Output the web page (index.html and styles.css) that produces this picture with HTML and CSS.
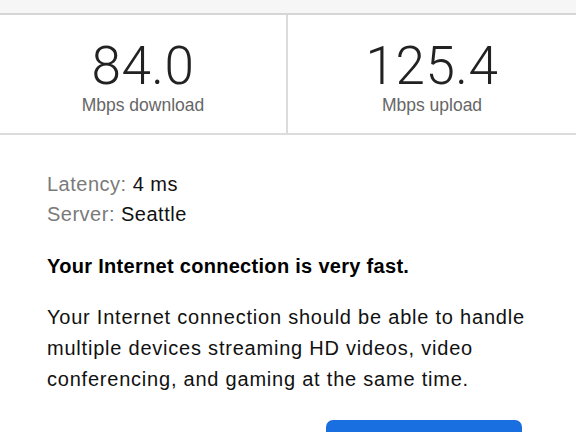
FILE: index.html
```html
<!DOCTYPE html>
<html lang="en">
<head>
<meta charset="utf-8">
<title>Speed test</title>
<link rel="stylesheet" href="styles.css">
</head>
<body>
<div class="topbar"></div>
<div class="stats">
  <div class="stat stat-left">
    <div class="num">84.0</div>
    <div class="unit">Mbps download</div>
  </div>
  <div class="stat">
    <div class="num">125.4</div>
    <div class="unit">Mbps upload</div>
  </div>
</div>
<div class="content">
  <div class="meta">
    <div><span class="label">Latency:</span> <span class="value">4 ms</span></div>
    <div><span class="label">Server:</span> <span class="value">Seattle</span></div>
  </div>
  <p class="headline">Your Internet connection is very fast.</p>
  <p class="desc">Your Internet connection should be able to handle multiple devices streaming HD videos, video conferencing, and gaming at the same time.</p>
  <div class="actions">
    <button class="btn" aria-label="Show more info"></button>
  </div>
</div>
</body>
</html>
```
FILE: styles.css
```css
html, body {
  margin: 0;
  padding: 0;
  background: #ffffff;
}
body {
  font-family: "Liberation Sans", Arial, sans-serif;
  color: #111;
  overflow: hidden;
}
.topbar {
  height: 13px;
  background: #f6f6f6;
  border-bottom: 2px solid #d6d6d6;
}
.stats {
  display: grid;
  grid-template-columns: 288px 1fr;
  height: 118px;
  border-bottom: 2px solid #dcdcdc;
}
.stat {
  display: flex;
  flex-direction: column;
  align-items: center;
  padding-top: 25px;
}
.stat-left {
  border-right: 2px solid #dcdcdc;
}
.num {
  font-family: Roboto, "Liberation Sans", sans-serif;
  font-weight: 300;
  font-size: 53px;
  line-height: 52px;
  color: #222;
  letter-spacing: 0.5px;
}
.unit {
  font-size: 17.5px;
  line-height: 22px;
  color: #666;
  margin-top: 2px;
}
.content {
  padding: 34px 24px 0 47px;
}
.meta {
  font-size: 20px;
  line-height: 30px;
  letter-spacing: 0.5px;
}
.label {
  color: #7a7a7a;
}
.value {
  color: #111;
}
.headline {
  margin: 22px 0 0;
  font-size: 20px;
  line-height: 30px;
  font-weight: bold;
  color: #000;
  letter-spacing: 0.3px;
}
.desc {
  margin: 21px 0 0;
  font-size: 20px;
  line-height: 31px;
  letter-spacing: 0.78px;
  color: #111;
}
.actions {
  display: flex;
  justify-content: flex-end;
  margin-top: 25px;
  padding-right: 30px;
}
.btn {
  width: 196px;
  height: 50px;
  border: none;
  border-radius: 7px;
  background: #1a6fe0;
}
```
